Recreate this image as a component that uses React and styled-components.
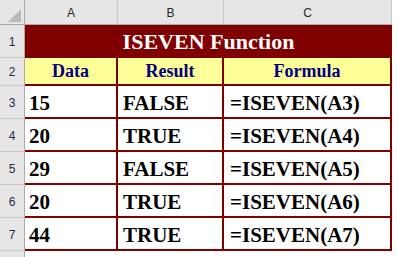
import React from "react";
import styled, { createGlobalStyle } from "styled-components";

const Global = createGlobalStyle`
  html, body { margin: 0; padding: 0; background: #ffffff; }
  #root { width: 397px; height: 257px; overflow: hidden; }
`;

const MAROON = "#800000";

const Sheet = styled.div`
  display: grid;
  grid-template-columns: 25px 93px 106px 168px 1fr;
  grid-template-rows: 25px 33px 28px repeat(5, 33px) 1fr;
  width: 397px;
  height: 257px;
  background: #ffffff;
`;

const Corner = styled.div`
  position: relative;
  background: #e6e6e6;
  border-right: 1px solid #ababab;
  border-bottom: 1px solid #ababab;
  box-sizing: border-box;
  svg { position: absolute; left: 8px; top: 9px; }
`;

const ColHead = styled.div`
  display: flex;
  align-items: center;
  justify-content: center;
  background: #e6e6e6;
  border-right: 1px solid #c6c6c6;
  border-bottom: 1px solid #ababab;
  box-sizing: border-box;
  font-family: "Liberation Sans", Arial, sans-serif;
  font-size: 12px;
  color: #262626;
  padding-top: 2px;
`;

const Blank = styled.div`
  background: #ffffff;
`;

const RowHead = styled.div`
  display: flex;
  align-items: center;
  justify-content: center;
  background: #e6e6e6;
  border-right: 1px solid #ababab;
  border-bottom: ${(p) => (p.$last ? "none" : "1px solid #c6c6c6")};
  box-sizing: border-box;
  font-family: "Liberation Sans", Arial, sans-serif;
  font-size: 12px;
  color: #1f2a44;
  padding-top: 1px;
`;

const Title = styled.div`
  grid-column: span 3;
  display: flex;
  align-items: center;
  justify-content: center;
  background: ${MAROON};
  color: #ffffff;
  font-family: "Liberation Serif", serif;
  font-weight: bold;
  font-size: 22px;
  padding-top: 1px;
  box-sizing: border-box;
`;

const HeadCell = styled.div`
  display: flex;
  align-items: center;
  justify-content: center;
  background: #ffff99;
  color: #000080;
  border-right: 2px solid ${MAROON};
  border-bottom: 2px solid ${MAROON};
  box-sizing: border-box;
  font-family: "Liberation Serif", serif;
  font-weight: bold;
  font-size: 18px;
  padding-top: 1px;
`;

const Cell = styled.div`
  display: flex;
  align-items: flex-end;
  background: #ffffff;
  color: #000000;
  border-right: 2px solid ${MAROON};
  border-bottom: 2px solid ${MAROON};
  box-sizing: border-box;
  font-family: "Liberation Serif", serif;
  font-weight: bold;
  font-size: 21px;
  line-height: 24px;
  padding-left: ${(p) => p.$indent}px;
  padding-bottom: 2px;
  white-space: nowrap;
`;

const rows = [
  ["15", "FALSE", "=ISEVEN(A3)"],
  ["20", "TRUE", "=ISEVEN(A4)"],
  ["29", "FALSE", "=ISEVEN(A5)"],
  ["20", "TRUE", "=ISEVEN(A6)"],
  ["44", "TRUE", "=ISEVEN(A7)"],
];

export default function App() {
  return (
    <>
      <Global />
      <Sheet>
        <Corner>
          <svg width="14" height="13" viewBox="0 0 14 13">
            <polygon points="13,0 13,13 0,13" fill="#b9b9b9" />
          </svg>
        </Corner>
        <ColHead>A</ColHead>
        <ColHead>B</ColHead>
        <ColHead>C</ColHead>
        <Blank />

        <RowHead>1</RowHead>
        <Title>ISEVEN Function</Title>
        <Blank />

        <RowHead>2</RowHead>
        <HeadCell>Data</HeadCell>
        <HeadCell>Result</HeadCell>
        <HeadCell>Formula</HeadCell>
        <Blank />

        {rows.map((r, i) => (
          <React.Fragment key={i}>
            <RowHead>{i + 3}</RowHead>
            <Cell $indent={4}>{r[0]}</Cell>
            <Cell $indent={5}>{r[1]}</Cell>
            <Cell $indent={6}>{r[2]}</Cell>
            <Blank />
          </React.Fragment>
        ))}

        <RowHead $last />
        <Blank />
        <Blank />
        <Blank />
        <Blank />
      </Sheet>
    </>
  );
}
